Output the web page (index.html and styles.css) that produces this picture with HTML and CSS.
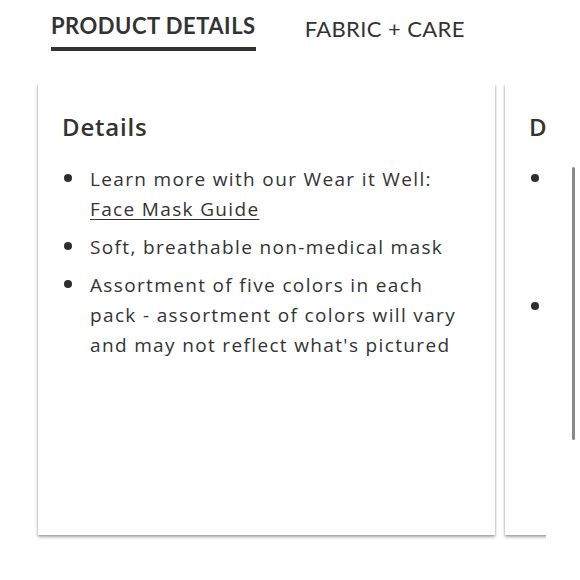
FILE: index.html
```html
<!DOCTYPE html>
<html lang="en">
<head>
<meta charset="utf-8">
<title>Product Details</title>
<link rel="stylesheet" href="styles.css">
</head>
<body>
<div class="page">
  <nav class="tabs">
    <div class="tab tab-active">PRODUCT DETAILS</div>
    <div class="tab tab-plain">FABRIC + CARE</div>
  </nav>
  <div class="carousel">
    <section class="card">
      <h2 class="card-title">Details</h2>
      <ul class="bullets">
        <li class="bullet-item"><span class="dot"></span><span class="item-text">Learn more with our Wear it Well: <a class="link" href="#">Face Mask Guide</a></span></li>
        <li class="bullet-item"><span class="dot"></span><span class="item-text">Soft, breathable non-medical mask</span></li>
        <li class="bullet-item"><span class="dot"></span><span class="item-text">Assortment of five colors in each pack - assortment of colors will vary and may not reflect what's pictured</span></li>
      </ul>
    </section>
    <section class="card">
      <h2 class="card-title">Disclaimer</h2>
      <ul class="bullets">
        <li class="bullet-item"><span class="dot"></span><span class="item-text">This mask is not a medical device, surgical mask or respirator and is not intended for use by children under the age of 2</span></li>
        <li class="bullet-item"><span class="dot"></span><span class="item-text">Wash before first use and after each wear</span></li>
      </ul>
    </section>
  </div>
  <div class="scroll-thumb"></div>
</div>
</body>
</html>
```
FILE: styles.css
```css
html, body {
  margin: 0;
  padding: 0;
  background: #ffffff;
}
body {
  font-family: "Open Sans", "Noto Sans", "DejaVu Sans", sans-serif;
  color: #333333;
}
.page {
  position: relative;
  width: 580px;
  height: 580px;
  overflow: hidden;
}
.tabs {
  display: flex;
  align-items: flex-start;
  gap: 49px;
  padding: 13px 0 0 51px;
  font-family: Lato, "Open Sans", sans-serif;
}
.tab {
  font-size: 22px;
  line-height: 26px;
  color: #333333;
}
.tab-active {
  font-weight: 700;
  letter-spacing: 0.5px;
  padding-bottom: 8px;
  border-bottom: 4px solid #333333;
}
.tab-plain {
  font-weight: 400;
  margin-top: 3px;
  letter-spacing: 0.4px;
}
.carousel {
  display: flex;
  gap: 10px;
  width: 508px;
  margin: 33px 0 0 30px;
  padding: 0 0 8px 8px;
  overflow: hidden;
}
.card {
  flex: 0 0 auto;
  box-sizing: border-box;
  width: 457px;
  height: 451px;
  padding: 28.4px 24px 0 24px;
  background: #ffffff;
  box-shadow: 0 2px 3px rgba(0, 0, 0, 0.35), 0 0 2px rgba(0, 0, 0, 0.18);
}
.card-title {
  margin: 0;
  font-size: 24px;
  line-height: 30px;
  font-weight: 600;
  letter-spacing: 0.8px;
}
.bullets {
  list-style: none;
  margin: 23px 0 0 0;
  padding: 0;
}
.bullet-item {
  display: flex;
  align-items: flex-start;
  font-size: 19px;
  line-height: 29.9px;
  letter-spacing: 1.35px;
}
.bullet-item + .bullet-item {
  margin-top: 7.8px;
}
.dot {
  flex: 0 0 auto;
  width: 8px;
  height: 8px;
  margin: 8.9px 18px 0 2px;
  border-radius: 50%;
  background: #2e2e2e;
}
.item-text {
  flex: 1 1 auto;
}
.link {
  color: #333333;
  text-decoration: underline;
  text-decoration-thickness: 1px;
  text-underline-offset: 3px;
}
.scroll-thumb {
  position: absolute;
  left: 572px;
  top: 167px;
  width: 3px;
  height: 273px;
  border-radius: 2px;
  background: #8a8a8a;
}
```
